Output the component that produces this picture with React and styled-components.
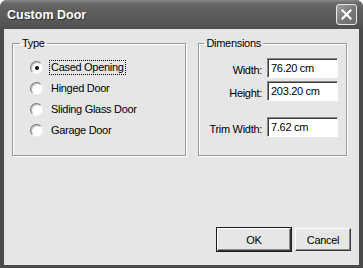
import React from 'react';
import styled, { createGlobalStyle } from 'styled-components';

const GlobalStyle = createGlobalStyle`
    html, body {
        margin: 0;
        background: #fff;
    }
    body {
        font-family: 'Liberation Sans', Arial, sans-serif;
        font-size: 11px;
        letter-spacing: -0.3px;
        color: #000;
    }
`;

const Window = styled.div`
    width: 363px;
    height: 268px;
    display: flex;
    flex-direction: column;
    background: #4a4a4a;
    border-radius: 7px 7px 0 0;
    overflow: hidden;
`;

const TitleBar = styled.div`
    height: 29px;
    flex-shrink: 0;
    display: flex;
    align-items: center;
    justify-content: space-between;
    padding: 0 6px 0 7px;
    background: linear-gradient(#8a8a8a 0px, #6a6a6a 3px, #5e5e5e 10px, #575757 22px, #4e4e4e 29px);
`;

const Title = styled.span`
    color: #fff;
    font-size: 12.5px;
    font-weight: bold;
    text-shadow: 1px 1px 0 #333;
    letter-spacing: 0;
`;

const CloseButton = styled.div`
    width: 19px;
    height: 19px;
    border: 1px solid #e8e8e8;
    border-radius: 3px;
    background: linear-gradient(135deg, #a0a0a0, #7a7a7a 50%, #6a6a6a);
    display: flex;
    align-items: center;
    justify-content: center;
`;

const Client = styled.div`
    flex: 1;
    margin: 0 4px 3px 4px;
    background: #e6e6e6;
    display: flex;
    flex-direction: column;
    padding: 8px 8px 14px 8px;
`;

const GroupRow = styled.div`
    display: flex;
    gap: 12px;
    margin-right: 4px;
`;

const Group = styled.fieldset`
    box-sizing: border-box;
    width: ${p => p.$width}px;
    height: 119px;
    margin: 0;
    padding: 0;
    border: 1px solid #9a9a9a;
    box-shadow: inset 1px 1px 0 #fff, 1px 1px 0 #fff;
`;

const Legend = styled.legend`
    margin-left: ${p => p.$offset}px;
    padding: 0 2px;
    line-height: 13px;
`;

const RadioList = styled.div`
    display: flex;
    flex-direction: column;
    padding: 7px 0 0 17px;
`;

const RadioRow = styled.label`
    height: 21px;
    display: flex;
    align-items: center;
    gap: 6px;
`;

const RadioCircle = styled.span`
    box-sizing: border-box;
    width: 13px;
    height: 13px;
    border-radius: 50%;
    border: 1px solid;
    border-color: #7a7a7a #f4f4f4 #f4f4f4 #7a7a7a;
    background: radial-gradient(circle at 60% 60%, #fff 45%, #e2e2e2 100%);
    box-shadow: inset 1px 1px 0 #bdbdbd;
    display: flex;
    align-items: center;
    justify-content: center;
    &::after {
        content: '';
        width: 4px;
        height: 4px;
        border-radius: 50%;
        background: ${p => (p.$checked ? '#111' : 'transparent')};
    }
`;

const RadioText = styled.span`
    padding: 0 1px;
    line-height: 13px;
    border: 1px dotted ${p => (p.$focused ? '#000' : 'transparent')};
`;

const FieldList = styled.div`
    display: grid;
    grid-template-columns: 1fr 71px;
    column-gap: 5px;
    align-items: center;
    padding: 8px 8px 0 0;
`;

const FieldLabel = styled.span`
    text-align: right;
    margin-top: ${p => p.$gap || 0}px;
`;

const Input = styled.div`
    box-sizing: border-box;
    height: 20px;
    margin-top: ${p => p.$gap || 0}px;
    margin-bottom: 3px;
    padding: 0 3px;
    display: flex;
    align-items: center;
    background: #fff;
    border: 1px solid;
    border-color: #8a8a8a #fff #fff #8a8a8a;
    box-shadow: inset 1px 1px 0 #3a3a3a;
`;

const Spacer = styled.div`
    flex: 1;
`;

const ButtonRow = styled.div`
    display: flex;
    justify-content: flex-end;
    gap: 4px;
`;

const Button = styled.div`
    box-sizing: border-box;
    width: ${p => p.$width}px;
    height: 23px;
    display: flex;
    align-items: center;
    justify-content: center;
    background: #e6e6e6;
    border: 1px solid;
    border-color: #fff #3a3a3a #3a3a3a #fff;
    box-shadow: inset -1px -1px 0 #8a8a8a;
    outline: ${p => (p.$default ? '1px solid #1a1a1a' : 'none')};
`;

const doorTypes = ['Cased Opening', 'Hinged Door', 'Sliding Glass Door', 'Garage Door'];

const dimensions = [
    { label: 'Width:', value: '76.20 cm' },
    { label: 'Height:', value: '203.20 cm' },
    { label: 'Trim Width:', value: '7.62 cm', gap: 13 },
];

const App = () => {
    return (
        <>
            <GlobalStyle />
            <Window>
                <TitleBar>
                    <Title>Custom Door</Title>
                    <CloseButton>
                        <svg width="11" height="11" viewBox="0 0 11 11">
                            <path d="M1.5 1.5 L9.5 9.5 M9.5 1.5 L1.5 9.5" stroke="#fff" strokeWidth="2.2" strokeLinecap="square" />
                        </svg>
                    </CloseButton>
                </TitleBar>
                <Client>
                    <GroupRow>
                        <Group $width={175}>
                            <Legend $offset={7}>Type</Legend>
                            <RadioList>
                                {doorTypes.map((t, i) => (
                                    <RadioRow key={t}>
                                        <RadioCircle $checked={i === 0} />
                                        <RadioText $focused={i === 0}>{t}</RadioText>
                                    </RadioRow>
                                ))}
                            </RadioList>
                        </Group>
                        <Group $width={149}>
                            <Legend $offset={5}>Dimensions</Legend>
                            <FieldList>
                                {dimensions.map(d => (
                                    <React.Fragment key={d.label}>
                                        <FieldLabel $gap={d.gap}>{d.label}</FieldLabel>
                                        <Input $gap={d.gap}>{d.value}</Input>
                                    </React.Fragment>
                                ))}
                            </FieldList>
                        </Group>
                    </GroupRow>
                    <Spacer />
                    <ButtonRow>
                        <Button $width={74} $default>OK</Button>
                        <Button $width={56}>Cancel</Button>
                    </ButtonRow>
                </Client>
            </Window>
        </>
    );
};

export default App;
